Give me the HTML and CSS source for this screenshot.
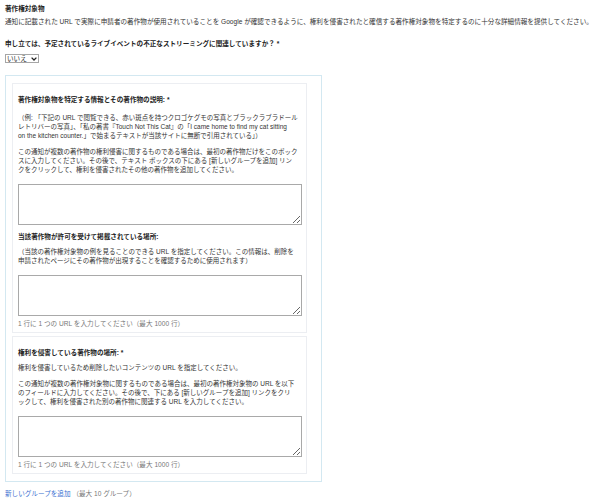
FILE: index.html
```html
<!DOCTYPE html>
<html lang="ja">
<head>
  <meta charset="utf-8">
  <title>著作権対象物</title>
  <link rel="stylesheet" href="styles.css">
</head>
<body>
  <h3 class="title">著作権対象物</h3>
  <p class="intro">通知に記載された URL で実際に申請者の著作物が使用されていることを Google が確認できるように、権利を侵害されたと確信する著作権対象物を特定するのに十分な詳細情報を提供してください。</p>

  <p class="question">申し立ては、予定されているライブイベントの不正なストリーミングに関連していますか？ *</p>
  <div class="field">
    <div class="select">
      <select id="live">
        <option>いいえ</option>
        <option>はい</option>
      </select>
      <svg class="chevron" width="6" height="4" viewBox="0 0 6 4"><path d="M0.6 0.6 L3 3 L5.4 0.6" fill="none" stroke="#222" stroke-width="1.3"/></svg>
    </div>
  </div>

  <div class="groups">
    <div class="group">
      <label class="label">著作権対象物を特定する情報とその著作物の説明: *</label>
      <p class="text example">（例: 「下記の URL で閲覧できる、赤い斑点を持つクロゴケグモの写真とブラックラブラドール<br>レトリバーの写真」、「私の著書『Touch Not This Cat』の「I came home to find my cat sitting<br>on the kitchen counter.」で始まるテキストが当該サイトに無断で引用されている」）</p>
      <p class="text">この通知が複数の著作物の権利侵害に関するものである場合は、最初の著作物だけをこのボック<br>スに入力してください。その後で、テキスト ボックスの下にある [新しいグループを追加] リン<br>クをクリックして、権利を侵害されたその他の著作物を追加してください。</p>
      <textarea class="box"></textarea>

      <label class="label">当該著作物が許可を受けて掲載されている場所:</label>
      <p class="text">（当該の著作権対象物の例を見ることのできる URL を指定してください。この情報は、削除を<br>申請されたページにその著作物が出現することを確認するために使用されます）</p>
      <textarea class="box last"></textarea>
      <div class="hint">1 行に 1 つの URL を入力してください（最大 1000 行）</div>
    </div>

    <div class="group">
      <label class="label">権利を侵害している著作物の場所: *</label>
      <p class="text">権利を侵害しているため削除したいコンテンツの URL を指定してください。</p>
      <p class="text">この通知が複数の著作権対象物に関するものである場合は、最初の著作権対象物の URL を以下<br>のフィールドに入力してください。その後で、下にある [新しいグループを追加] リンクをクリ<br>ックして、権利を侵害された別の著作物に関連する URL を入力してください。</p>
      <textarea class="box last"></textarea>
      <div class="hint">1 行に 1 つの URL を入力してください（最大 1000 行）</div>
    </div>
  </div>

  <div class="add">
    <a href="#" class="add-link">新しいグループを追加</a>
    <span class="add-note">（最大 10 グループ）</span>
  </div>
</body>
</html>
```

FILE: styles.css
```css
html, body {
  background: #fff;
}
body {
  margin: 0;
  padding: 4px 5px;
  font-family: "Liberation Sans", "Noto Sans CJK JP", sans-serif;
  font-size: 6.6px;
  line-height: 9px;
  color: #333;
}
.title {
  font-size: 6.6px;
  font-weight: bold;
  color: #222;
  margin: 0 0 4px;
}
.intro {
  margin: 0 0 12.5px;
}
.question {
  font-weight: bold;
  color: #222;
  margin: 0 0 6.5px;
}

/* fake select */
.field {
  display: flex;
  margin-bottom: 12px;
}
.select {
  display: flex;
  align-items: center;
  height: 9px;
  width: 34px;
  box-sizing: border-box;
  border: 1px solid #a6a6a6;
  background: #fff;
}
.select select {
  appearance: none;
  -webkit-appearance: none;
  border: none;
  background: transparent;
  font: inherit;
  color: #222;
  padding: 0 0 0 1px;
  margin: 0;
  height: 7px;
  line-height: 7px;
  width: 24px;
  outline: none;
}
.chevron {
  margin-left: 1px;
}

/* groups */
.groups {
  width: 317px;
  box-sizing: border-box;
  border: 1px solid #d3e8f1;
  padding: 7px 14px 7px 6px;
  display: flex;
  flex-direction: column;
  gap: 3px;
}
.group {
  border: 1px solid #eceef2;
  padding: 11px 5px 4px;
  display: flex;
  flex-direction: column;
}
.label {
  font-weight: bold;
  color: #222;
  margin-bottom: 6px;
}
.text {
  margin: 0 0 7px;
  font-size: 6.5px;
  white-space: nowrap;
}
.example {
  margin-top: 3px;
}
.box {
  display: block;
  width: 284px;
  height: 41px;
  box-sizing: border-box;
  border: 1px solid #a9a9a9;
  margin: 3px 0 7px;
  padding: 2px;
  font: inherit;
  resize: vertical;
}
.box.last {
  margin-bottom: 3px;
}
.hint {
  color: #777;
}

.add {
  margin-top: 7px;
  color: #777;
}
.add-link {
  color: #3b6fd1;
  text-decoration: none;
}
```
